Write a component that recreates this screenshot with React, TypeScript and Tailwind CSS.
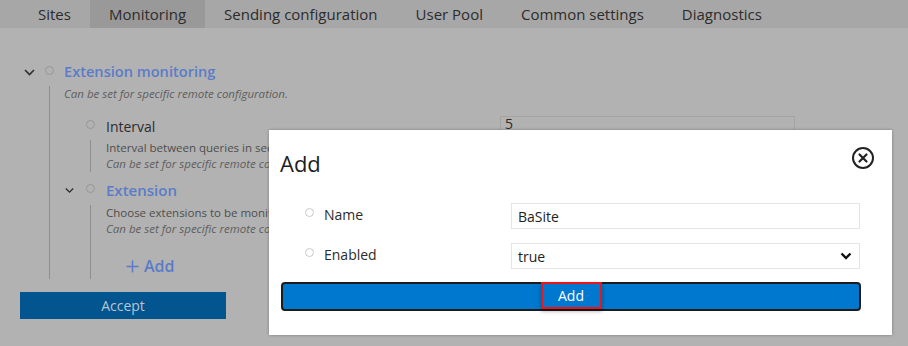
import React from "react";

const tabs = ["Sites", "Monitoring", "Sending configuration", "User Pool", "Common settings", "Diagnostics"];

const Chevron = ({ className }: { className?: string }) => (
  <svg width="11" height="7" viewBox="0 0 11 7" className={className}>
    <polyline points="1,1 5.5,5.5 10,1" fill="none" stroke="#2e2e2e" strokeWidth="1.6" />
  </svg>
);

const Dot = ({ light }: { light?: boolean }) => (
  <span
    className={
      light
        ? "-mt-[4px] block h-[9px] w-[9px] shrink-0 rounded-full border border-[#c9c9c9] bg-white"
        : "-mt-[4px] block h-[9px] w-[9px] shrink-0 rounded-full border border-[#979797]"
    }
  />
);

const App = () => {
  return (
    <div className="relative h-[346px] w-[908px] overflow-hidden bg-[#b2b2b2] font-['Open_Sans',sans-serif]">
      {/* tab bar */}
      <div className="flex h-[28px] bg-[#a7a7a7] pl-[19px] text-[15px] text-[#2c2c2c]">
        {tabs.map((t) => (
          <div
            key={t}
            className={
              t === "Monitoring"
                ? "flex items-center bg-[#999999] px-[19px]"
                : "flex items-center px-[19px]"
            }
          >
            {t}
          </div>
        ))}
      </div>

      {/* background page */}
      <div className="pl-[20px] pt-[34px]">
        <div className="flex h-[20px] items-center pl-[4px]">
          <Chevron />
          <span className="ml-[10px]">
            <Dot />
          </span>
          <span className="ml-[10px] text-[14.6px] font-semibold text-[#5a7cc8]">Extension monitoring</span>
        </div>

        <div className="ml-[29px] mt-[4px] border-l border-[#8e8e8e] pl-[14px]">
          <div className="text-[11.5px] italic leading-[16px] text-[#5e5e5e]">
            Can be set for specific remote configuration.
          </div>

          {/* Interval */}
          <div className="mt-[14px] flex h-[20px] items-start">
            <div className="flex h-[20px] w-[436px] shrink-0 items-center pl-[22px]">
              <Dot />
              <span className="ml-[11px] text-[14px] text-[#2c2c2c]">Interval</span>
            </div>
            <div className="h-[30px] w-[295px] shrink-0 border border-[#a4a4a4] px-[4px] text-[14px] leading-[14px] text-[#2c2c2c]">
              5
            </div>
          </div>
          <div className="ml-[26px] mt-[4px] border-l border-[#8e8e8e] pl-[15px] text-[11.5px] leading-[16px]">
            <div className="text-[#4e4e4e]">Interval between queries in seconds</div>
            <div className="italic text-[#5e5e5e]">Can be set for specific remote configuration.</div>
          </div>

          {/* Extension */}
          <div className="mt-[8px] flex h-[20px] items-center pl-[1px]">
            <Chevron className="w-[9px]" />
            <span className="ml-[12px]">
              <Dot />
            </span>
            <span className="ml-[11px] text-[15px] font-semibold text-[#5a7cc8]">Extension</span>
          </div>
          <div className="ml-[26px] mt-[5px] border-l border-[#8e8e8e] pb-[3px] pl-[15px] text-[11.5px] leading-[16px]">
            <div className="text-[#4e4e4e]">Choose extensions to be monitored</div>
            <div className="italic text-[#5e5e5e]">Can be set for specific remote configuration.</div>
            <div className="ml-[20px] mt-[19px] flex h-[20px] items-center text-[16px] font-semibold text-[#5a7cc8]">
              <svg width="13" height="13" viewBox="0 0 13 13">
                <path d="M6.5 0.5v12M0.5 6.5h12" stroke="#5a7cc8" strokeWidth="1.5" />
              </svg>
              <span className="ml-[5px]">Add</span>
            </div>
          </div>
        </div>

        <button className="mt-[13px] flex h-[27px] w-[206px] items-center justify-center bg-[#02558f] text-[14px] text-[#b8c4d0]">
          Accept
        </button>
      </div>

      {/* modal */}
      <div className="absolute left-[269px] top-[130px] h-[205px] w-[623px] bg-white shadow-[0_0_3px_rgba(0,0,0,0.3)]">
        <div className="flex items-start justify-between pl-[11px] pr-[17px] pt-[16px]">
          <span className="mt-[2px] text-[22px] leading-[30px] text-[#1e1e1e]">Add</span>
          <svg width="24" height="24" viewBox="0 0 24 24">
            <circle cx="12" cy="12" r="10" fill="none" stroke="#222" strokeWidth="2" />
            <path d="M8.5 8.5l7 7M15.5 8.5l-7 7" stroke="#222" strokeWidth="2.2" strokeLinecap="round" />
          </svg>
        </div>

        <div className="mt-[25px] flex items-center pl-[36px]">
          <div className="-mt-[3px] flex w-[206px] items-center">
            <Dot light />
            <span className="ml-[10px] text-[14px] text-[#2c2c2c]">Name</span>
          </div>
          <div className="flex h-[26px] w-[349px] items-center border border-[#e4e4e4] pl-[6px] text-[14px] text-[#1e1e1e]">
            BaSite
          </div>
        </div>

        <div className="mt-[14px] flex items-center pl-[36px]">
          <div className="-mt-[3px] flex w-[206px] items-center">
            <Dot light />
            <span className="ml-[10px] text-[14px] text-[#2c2c2c]">Enabled</span>
          </div>
          <div className="flex h-[26px] w-[349px] items-center justify-between border border-[#e4e4e4] pl-[6px] pr-[7px] text-[14px] text-[#1e1e1e]">
            <span>true</span>
            <svg width="12" height="8" viewBox="0 0 12 8">
              <polyline points="1.5,1.5 6,6 10.5,1.5" fill="none" stroke="#111" strokeWidth="2.4" />
            </svg>
          </div>
        </div>

        <button className="ml-[12px] mt-[13px] flex h-[29px] w-[580px] items-start justify-center rounded-[4px] border-2 border-[#1c1c1c] bg-[#0078d0]">
          <span className="-mt-[2px] flex h-[27px] w-[61px] items-center justify-center border-2 border-[#e8161b] text-[14px] text-white shadow-[0_2px_4px_rgba(0,0,0,0.35)]">
            Add
          </span>
        </button>
      </div>
    </div>
  );
};

export default App;
